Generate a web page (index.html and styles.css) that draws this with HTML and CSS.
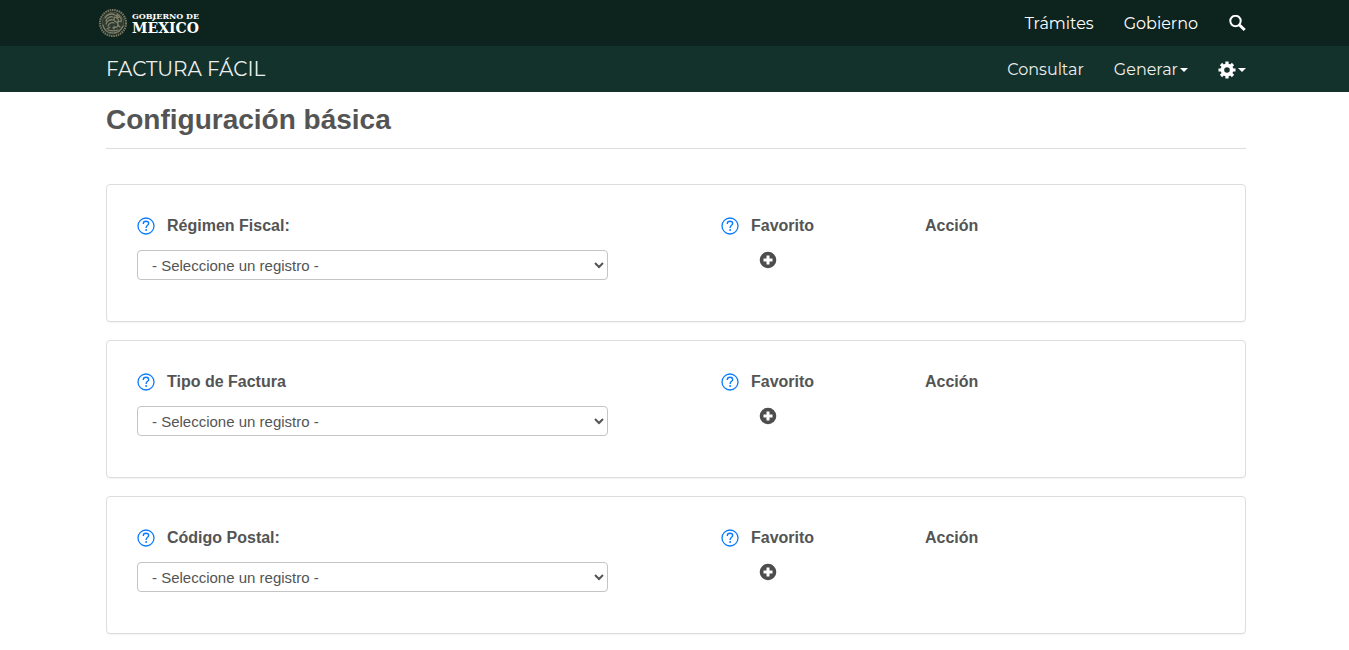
FILE: index.html
```html
<!DOCTYPE html>
<html lang="es">
<head>
<meta charset="utf-8">
<meta name="viewport" content="width=device-width, initial-scale=1">
<title>Factura Fácil</title>
<link rel="stylesheet" href="styles.css">
</head>
<body>
<svg class="sprite" aria-hidden="true">
  <symbol id="help" viewBox="0 0 18 18"><circle cx="9" cy="9" r="8" fill="none" stroke="currentColor" stroke-width="1.300"/><path d="M6.300 6.900V6.500c0-1.400 1.200-2.300 2.700-2.300s2.700.9 2.700 2.200c0 1.900-2.600 2-2.600 4.500" fill="none" stroke="currentColor" stroke-width="1.400"/><circle cx="9.100" cy="13" r=".95" fill="currentColor"/></symbol>
  <symbol id="plus" viewBox="0 0 18 18"><path fill="currentColor" fill-rule="evenodd" d="M9 .7a8.300 8.300 0 1 0 0 16.600A8.300 8.300 0 0 0 9 .7zM7.500 4.500h3v3h3v3h-3v3h-3v-3h-3v-3h3z"/></symbol>
</svg>
<header>
  <div class="bar bar-top">
    <div class="wrap">
      <a class="logo" href="#" aria-label="Gobierno de México">
        <svg class="seal" viewBox="0 0 30 30" aria-hidden="true">
          <circle cx="15" cy="15" r="13" fill="none" stroke="#77745f" stroke-width="2.200" stroke-dasharray="1.600 .7"/>
          <circle cx="15" cy="15" r="10.900" fill="#2b3b32" stroke="#5a5f4f" stroke-width=".8"/>
          <g fill="none" stroke="#858269" stroke-linecap="round">
            <path stroke-width="1.300" d="M7 10c2-4 7-5 10-3l3 1-2 1.500c2 1 3 3 2 5M8 13c1-3 4-5 7-4M8 16c1-3 4-5 7-4M10 18c1-3 4-4 6-3M17 9c-2 2-1 4 1 5s3 3 1 5l-4 1"/>
            <path stroke-width="1.100" d="M19 6c3 2 5 5 4 8M22 9l-3 1M23 13l-4 1M12 19l-3 2M16 18v3M10 22c3 1 7 1 10 0M20 17l2 2"/>
            <path stroke-width="1.200" d="M5 17c1 5 5 8 10 8s8-3 10-7"/>
          </g>
        </svg>
        <span class="logo-text"><span class="logo-small">GOBIERNO DE</span><span class="logo-big">MÉXICO</span></span>
      </a>
      <nav aria-label="Gobierno">
        <a href="#">Trámites</a>
        <a href="#">Gobierno</a>
        <a href="#" aria-label="Buscar"><svg class="search" viewBox="0 0 18 18" aria-hidden="true"><circle cx="7.500" cy="6" r="5.200" fill="none" stroke="currentColor" stroke-width="2"/><path d="m11.500 10 5.200 5" stroke="currentColor" stroke-width="3"/></svg></a>
      </nav>
    </div>
  </div>
  <div class="bar bar-sub">
    <div class="wrap">
      <a class="brand" href="#">FACTURA FÁCIL</a>
      <nav aria-label="Principal">
        <a href="#">Consultar</a>
        <button type="button">Generar<span class="caret"></span></button>
        <button type="button" aria-label="Configuración"><svg class="gear" viewBox="0 0 18 18" aria-hidden="true"><circle cx="9" cy="9" r="4.600" fill="none" stroke="currentColor" stroke-width="3.600"/><path stroke="currentColor" stroke-width="3.200" d="M9 .5v3M9 14.500v3M.5 9h3M14.500 9h3M3 3l2.100 2.100M12.900 12.900 15 15M3 15l2.100-2.100M12.900 5.100 15 3"/></svg><span class="caret"></span></button>
      </nav>
    </div>
  </div>
</header>
<main class="wrap main">
  <h1>Configuración básica</h1>
  <section class="card">
    <div>
      <div class="head"><svg class="help"><use href="#help"/></svg><label for="regimen">Régimen Fiscal:</label></div>
      <select id="regimen"><option>- Seleccione un registro -</option></select>
    </div>
    <div>
      <div class="head"><svg class="help"><use href="#help"/></svg><span>Favorito</span></div>
      <button class="add" type="button" aria-label="Agregar régimen fiscal"><svg><use href="#plus"/></svg></button>
    </div>
    <div class="head">Acción</div>
  </section>
  <section class="card">
    <div>
      <div class="head"><svg class="help"><use href="#help"/></svg><label for="tipo">Tipo de Factura</label></div>
      <select id="tipo"><option>- Seleccione un registro -</option></select>
    </div>
    <div>
      <div class="head"><svg class="help"><use href="#help"/></svg><span>Favorito</span></div>
      <button class="add" type="button" aria-label="Agregar tipo de factura"><svg><use href="#plus"/></svg></button>
    </div>
    <div class="head">Acción</div>
  </section>
  <section class="card">
    <div>
      <div class="head"><svg class="help"><use href="#help"/></svg><label for="codigo">Código Postal:</label></div>
      <select id="codigo"><option>- Seleccione un registro -</option></select>
    </div>
    <div>
      <div class="head"><svg class="help"><use href="#help"/></svg><span>Favorito</span></div>
      <button class="add" type="button" aria-label="Agregar código postal"><svg><use href="#plus"/></svg></button>
    </div>
    <div class="head">Acción</div>
  </section>
</main>
</body>
</html>
```
FILE: styles.css
```css
* { box-sizing: border-box; }
body {
  margin: 0;
  background: #fff;
  color: #545454;
  font: 16px/22px "Liberation Sans", Arial, sans-serif;
}
svg { display: block; }
.sprite { display: none; }
.wrap {
  max-width: 1143px;
  margin: 0 auto;
  padding-left: 3px;
}
.bar {
  color: #fff;
  font-family: Montserrat, Inter, sans-serif;
  font-weight: 400;
}
.bar-top { background: #0c231e; }
.bar-sub { background: #13322b; color: #eee; }
.bar .wrap {
  display: flex;
  align-items: center;
  justify-content: space-between;
  min-height: 46px;
}
.bar a, .bar button {
  display: flex;
  align-items: center;
  padding: 0;
  border: 0;
  background: none;
  color: inherit;
  font: inherit;
  text-decoration: none;
}
.bar nav { display: flex; gap: 30px; padding-top: 2px; }
.bar .logo { gap: 4px; margin-left: -8px; }
.seal { width: 30px; height: 30px; }
.logo-text {
  display: flex;
  flex-direction: column;
  font-family: "DejaVu Serif", serif;
  font-weight: 700;
}
.logo-small { font-size: 8px; line-height: 10px; }
.logo-big { font-size: 14px; line-height: 14px; }
.bar .brand { font-size: 20px; line-height: 24px; }
.search { width: 18px; height: 18px; }
.gear { width: 18px; height: 18px; color: #fff; }
.caret {
  margin-left: 2px;
  border: 4px solid transparent;
  border-top-color: #fff;
  border-bottom: 0;
}
h1 {
  margin: 0 0 35px;
  padding: 11px 0 12px;
  border-bottom: 1px solid #ddd;
  font-size: 28px;
  line-height: 33px;
}
.card {
  display: grid;
  grid-template-columns: 584fr 204fr 290fr;
  align-items: start;
  margin-bottom: 18px;
  padding: 30px 30px 41px;
  border: 1px solid #ddd;
  border-radius: 4px;
  box-shadow: 0 1px 1px rgba(0, 0, 0, .05);
}
.head {
  display: flex;
  align-items: center;
  gap: 12px;
  font-weight: 700;
}
.help { width: 18px; height: 18px; color: #0b7bff; }
select {
  display: block;
  width: calc(100% - 113px);
  height: 30px;
  margin-top: 13px;
  padding: 0 0 0 10px;
  border: 1px solid #c4c4c4;
  border-radius: 4px;
  background: #fff;
  color: #545454;
  font: 15px "Liberation Sans", Arial, sans-serif;
}
.add {
  display: block;
  margin: 14px 0 0 38px;
  padding: 0;
  border: 0;
  background: none;
  color: #4d4d4d;
}
.add svg { width: 18px; height: 18px; }
```
